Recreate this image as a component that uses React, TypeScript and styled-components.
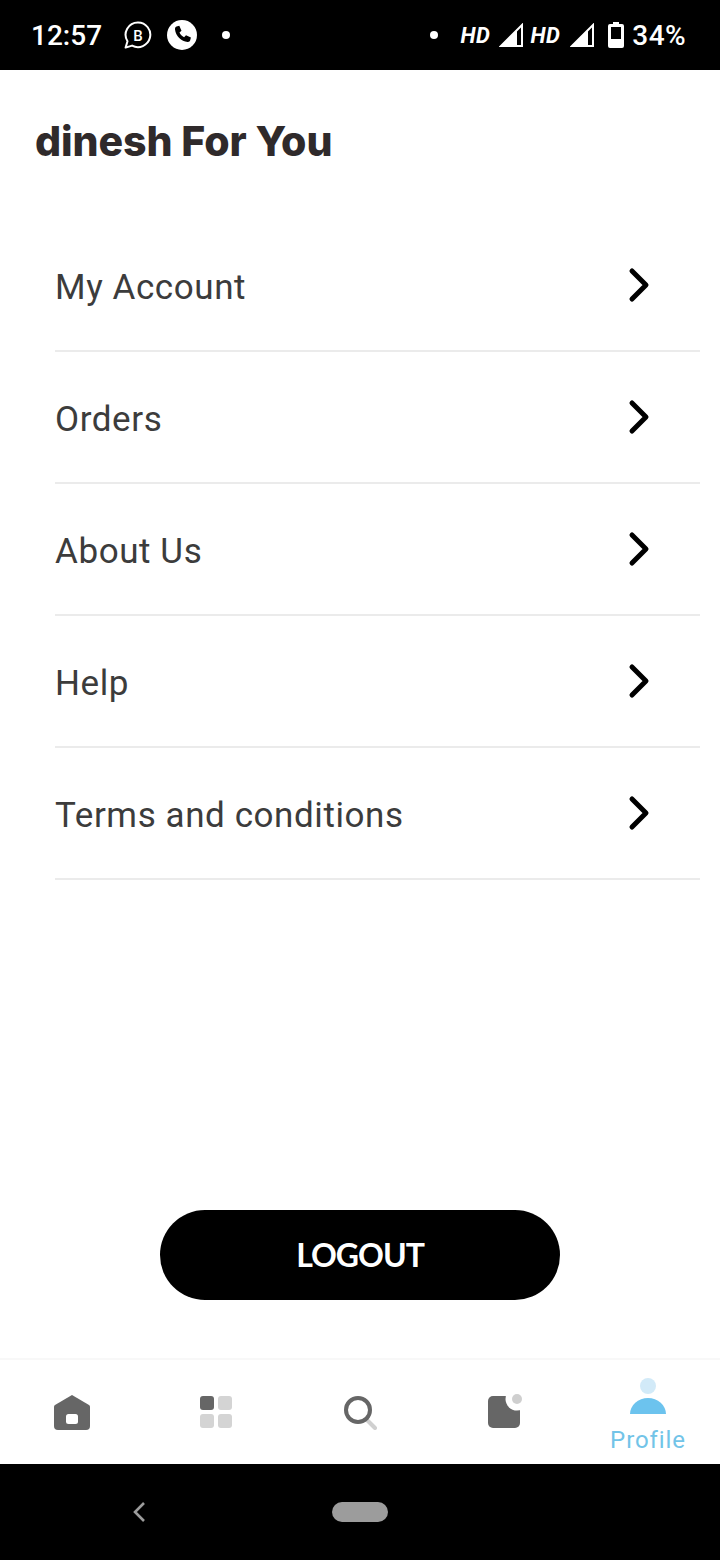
import React from "react";
import styled, { createGlobalStyle } from "styled-components";

const Global = createGlobalStyle`
  html, body { margin: 0; padding: 0; background: #fff; }
  * { box-sizing: border-box; }
`;

const Page = styled.div`
  width: 720px;
  height: 1560px;
  display: flex;
  flex-direction: column;
  background: #fff;
  font-family: Roboto, "Liberation Sans", sans-serif;
`;

const StatusBar = styled.div`
  height: 70px;
  flex: none;
  background: #000;
  color: #fff;
  display: flex;
  align-items: center;
  justify-content: space-between;
  padding: 0 34px 0 31px;
`;

const StatusGroup = styled.div`
  display: flex;
  align-items: center;
`;

const Clock = styled.span`
  width: 70px;
  font-size: 28px;
  font-weight: 500;
  margin-right: 22px;
  white-space: nowrap;
`;

const Battery = styled.span`
  font-size: 28px;
  font-weight: 500;
  letter-spacing: 0.4px;
  margin-left: 8px;
`;

const Hd = styled.span<{ $gap: number; $left?: number }>`
  font-size: 22px;
  font-weight: 700;
  font-style: italic;
  margin-left: ${(p) => p.$left ?? 0}px;
  margin-right: ${(p) => p.$gap}px;
  letter-spacing: 0.5px;
`;

const Dot = styled.span<{ $l: number; $r: number }>`
  width: 8px;
  height: 8px;
  border-radius: 50%;
  background: #fff;
  margin-left: ${(p) => p.$l}px;
  margin-right: ${(p) => p.$r}px;
`;

const Main = styled.main`
  flex: 1;
  display: flex;
  flex-direction: column;
`;

const Title = styled.h1`
  margin: 44px 0 0 35px;
  height: 54px;
  font-family: Inter, sans-serif;
  font-size: 41px;
  line-height: 54px;
  font-weight: 800;
  letter-spacing: -0.1px;
  color: #2f2a2b;
`;

const Menu = styled.ul`
  list-style: none;
  margin: 52px 20px 0 55px;
  padding: 0;
`;

const Row = styled.li`
  height: 132px;
  display: flex;
  align-items: center;
  justify-content: space-between;
  padding: 0 50px 0 0;
  border-bottom: 2px solid #ebebeb;
`;

const RowLabel = styled.span`
  padding-top: 4px;
  font-size: 35px;
  color: #3c3c3c;
  letter-spacing: 0.58px;
`;

const LogoutWrap = styled.div`
  margin-top: auto;
  padding-bottom: 58px;
  display: flex;
  justify-content: center;
`;

const Logout = styled.button`
  width: 400px;
  height: 90px;
  border: 0;
  border-radius: 45px;
  padding: 0 0 2px;
  background: #000;
  color: #fff;
  font-family: Lato, sans-serif;
  font-size: 32px;
  font-weight: 700;
  letter-spacing: -1px;
`;

const TabBar = styled.nav`
  height: 106px;
  flex: none;
  display: grid;
  grid-template-columns: repeat(5, 144px);
  border-top: 2px solid #f8f8f8;
`;

const Tab = styled.div`
  display: flex;
  flex-direction: column;
  align-items: center;
  justify-content: center;
  padding-bottom: 2px;
`;

const ActiveTab = styled(Tab)`
  justify-content: flex-start;
  padding-top: 18px;
`;

const TabLabel = styled.span`
  font-size: 24px;
  line-height: 30px;
  margin-top: 11px;
  letter-spacing: 0.9px;
  color: #72c4e8;
`;

const NavBar = styled.div`
  height: 96px;
  flex: none;
  background: #000;
  display: flex;
  align-items: center;
  gap: 186px;
  padding-left: 132px;
`;

const Pill = styled.div`
  width: 56px;
  height: 20px;
  border-radius: 10px;
  background: #9c9c9c;
`;

const Chevron = () => (
  <svg width="22" height="36" viewBox="0 0 22 36">
    <path d="M4 4 L18 18 L4 32" fill="none" stroke="#000" strokeWidth="5" strokeLinecap="round" strokeLinejoin="round" />
  </svg>
);

const items = ["My Account", "Orders", "About Us", "Help", "Terms and conditions"];

export default function App() {
  return (
    <Page>
      <Global />
      <StatusBar>
        <StatusGroup>
          <Clock>12:57</Clock>
          <svg width="30" height="30" viewBox="0 0 30 30" style={{ marginRight: 14 }}>
            <path d="M15 2.5a12.3 12.3 0 1 1-5.9 23.1L2.6 27.6l1.9-6.3A12.3 12.3 0 0 1 15 2.5z" fill="none" stroke="#fff" strokeWidth="2" strokeLinejoin="round" />
            <text x="15" y="20.5" fontSize="15" fontWeight="500" fontFamily="Roboto, sans-serif" textAnchor="middle" fill="#fff">B</text>
          </svg>
          <svg width="30" height="30" viewBox="0 0 30 30">
            <circle cx="15" cy="15" r="15" fill="#fff" />
            <path d="M9.5 6.5l2.8-.8 2.2 5-2 1.8c.9 2 2.5 3.7 4.6 4.7l1.9-2 4.9 2.2-.7 2.9c-.3 1.1-1.4 1.9-2.6 1.7-6.4-.8-11.7-6-12.6-12.6-.1-1.2.4-2.6 1.5-2.9z" fill="#000" />
          </svg>
          <Dot $l={25} $r={0} />
        </StatusGroup>
        <StatusGroup>
          <Dot $l={0} $r={22} />
          <Hd $gap={9}>HD</Hd>
          <svg width="25" height="25" viewBox="0 0 25 25">
            <path d="M23 2v21H2z" fill="none" stroke="#fff" strokeWidth="2" />
            <path d="M18 7v16H2z" fill="#fff" />
          </svg>
          <Hd $gap={10} $left={6}>HD</Hd>
          <svg width="25" height="25" viewBox="0 0 25 25" style={{ marginRight: 13 }}>
            <path d="M23 2v21H2z" fill="none" stroke="#fff" strokeWidth="2" />
            <path d="M18 7v16H2z" fill="#fff" />
          </svg>
          <svg width="16" height="26" viewBox="0 0 16 26">
            <path d="M5 0h6v2h3a2 2 0 0 1 2 2v20a2 2 0 0 1-2 2H2a2 2 0 0 1-2-2V4a2 2 0 0 1 2-2h3z" fill="#fff" />
            <rect x="3" y="5" width="10" height="12" fill="#000" />
          </svg>
          <Battery>34%</Battery>
        </StatusGroup>
      </StatusBar>
      <Main>
        <Title>dinesh For You</Title>
        <Menu>
          {items.map((t) => (
            <Row key={t}>
              <RowLabel>{t}</RowLabel>
              <Chevron />
            </Row>
          ))}
        </Menu>
        <LogoutWrap>
          <Logout>LOGOUT</Logout>
        </LogoutWrap>
      </Main>
      <TabBar>
        <Tab>
          <svg width="38" height="38" viewBox="0 0 38 38">
            <path d="M19 3 L36 13 Q37 13.6 37 15 V34 Q37 38 33 38 H5 Q1 38 1 34 V15 Q1 13.6 2 13 Z" fill="#666" />
            <rect x="13" y="22" width="12" height="10" rx="2.5" fill="#fff" />
          </svg>
        </Tab>
        <Tab>
          <svg width="34" height="36" viewBox="0 0 34 36">
            <rect x="1" y="3" width="14" height="14" rx="3" fill="#666" />
            <rect x="19" y="3" width="14" height="14" rx="3" fill="#d4d4d4" />
            <rect x="1" y="21" width="14" height="14" rx="3" fill="#d4d4d4" />
            <rect x="19" y="21" width="14" height="14" rx="3" fill="#d4d4d4" />
          </svg>
        </Tab>
        <Tab>
          <svg width="34" height="38" viewBox="0 0 34 38">
            <path d="M24 28 L32 36" stroke="#d0d0d0" strokeWidth="4" strokeLinecap="round" />
            <circle cx="15" cy="18" r="12" fill="none" stroke="#666" strokeWidth="4" />
          </svg>
        </Tab>
        <Tab>
          <svg width="36" height="36" viewBox="0 0 36 36">
            <rect x="2" y="3" width="32" height="32" rx="5" fill="#666" />
            <circle cx="31" cy="6" r="11.5" fill="#fff" />
            <circle cx="31" cy="6" r="5" fill="#cfcfcf" />
          </svg>
        </Tab>
        <ActiveTab>
          <svg width="36" height="36" viewBox="0 0 36 36">
            <circle cx="18" cy="8" r="8" fill="#d2eaf8" />
            <path d="M0 36 A18 16 0 0 1 36 36z" fill="#6cc3ee" />
          </svg>
          <TabLabel>Profile</TabLabel>
        </ActiveTab>
      </TabBar>
      <NavBar>
        <svg width="14" height="22" viewBox="0 0 14 22">
          <path d="M12 2 L3 11 L12 20" fill="none" stroke="#9c9c9c" strokeWidth="2.6" />
        </svg>
        <Pill />
      </NavBar>
    </Page>
  );
}
